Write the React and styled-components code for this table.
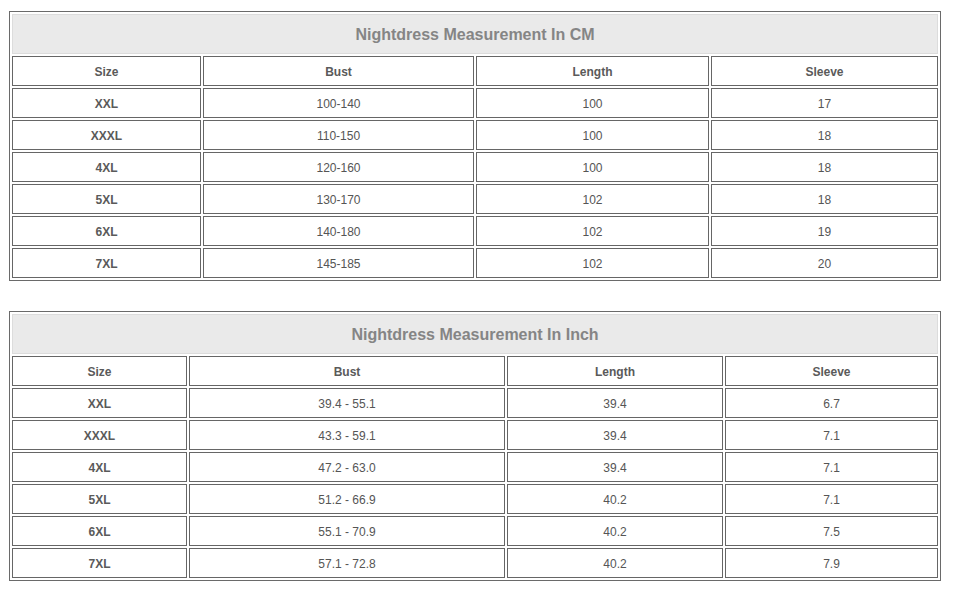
import styled, { createGlobalStyle } from 'styled-components';

const GlobalStyle = createGlobalStyle`
    body {
        margin: 0;
        background: #fff;
        font-family: "Liberation Sans", Arial, sans-serif;
    }
`;

// size chart data
const charts = [
    {
        title: 'Nightdress Measurement In CM',
        widths: [189, 271, 233, 227],
        rows: [
            ['XXL', '100-140', '100', '17'],
            ['XXXL', '110-150', '100', '18'],
            ['4XL', '120-160', '100', '18'],
            ['5XL', '130-170', '102', '18'],
            ['6XL', '140-180', '102', '19'],
            ['7XL', '145-185', '102', '20'],
        ],
    },
    {
        title: 'Nightdress Measurement In Inch',
        widths: [175, 316, 216, 213],
        rows: [
            ['XXL', '39.4 - 55.1', '39.4', '6.7'],
            ['XXXL', '43.3 - 59.1', '39.4', '7.1'],
            ['4XL', '47.2 - 63.0', '39.4', '7.1'],
            ['5XL', '51.2 - 66.9', '40.2', '7.1'],
            ['6XL', '55.1 - 70.9', '40.2', '7.5'],
            ['7XL', '57.1 - 72.8', '40.2', '7.9'],
        ],
    },
];

const headings = ['Size', 'Bust', 'Length', 'Sleeve'];

function SizeChart({ title, widths, rows }) {
    return (
        <Table>
            <colgroup>
                {widths.map((w, i) => (
                    <col key={i} style={{ width: w }} />
                ))}
            </colgroup>
            <tbody>
                <tr>
                    <TitleCell colSpan={4}>{title}</TitleCell>
                </tr>
                <tr>
                    {headings.map((h) => (
                        <Cell key={h} $bold>{h}</Cell>
                    ))}
                </tr>
                {rows.map((row) => (
                    <tr key={row[0]}>
                        {row.map((v, i) => (
                            <Cell key={i} $bold={i === 0}>{v}</Cell>
                        ))}
                    </tr>
                ))}
            </tbody>
        </Table>
    );
}

export default function App() {
    return (
        <Page>
            <GlobalStyle />
            {charts.map((c) => (
                <SizeChart key={c.title} {...c} />
            ))}
        </Page>
    );
}

const Page = styled.div`
    display: flex;
    flex-direction: column;
    gap: 30px;
    padding: 11px 0 0 9px;
`;

const Table = styled.table`
    width: 932px;
    table-layout: fixed;
    border-collapse: separate;
    border-spacing: 2px;
    border: 1px solid #6a6a6a;
`;

const TitleCell = styled.td`
    box-sizing: border-box;
    height: 40px;
    padding: 1px 0 0;
    background: #eaeaea;
    border: 1px solid #dcdcdc;
    text-align: center;
    vertical-align: middle;
    font-size: 16px;
    font-weight: bold;
    color: #858585;
`;

const Cell = styled.td`
    box-sizing: border-box;
    height: 30px;
    padding: 1px 0 0;
    border: 1px solid #666;
    text-align: center;
    vertical-align: middle;
    font-size: 12px;
    font-weight: ${(p) => (p.$bold ? 'bold' : 'normal')};
    color: ${(p) => (p.$bold ? '#5a5a5a' : '#555')};
`;
